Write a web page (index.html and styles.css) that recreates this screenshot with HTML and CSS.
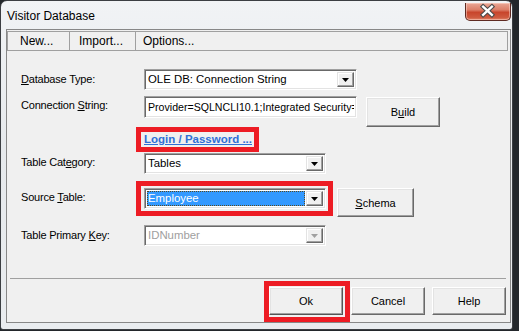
FILE: index.html
```html
<!DOCTYPE html>
<html lang="en">
<head>
  <meta charset="UTF-8" />
  <title>Visitor Database</title>
  <link rel="stylesheet" href="styles.css">
</head>
<body>

  <div class="window">
    <div class="titlebar">
      <span class="title">Visitor Database</span>
      <div class="close">
        <svg width="46" height="18" viewBox="0 0 46 18">
          <path d="M18.5 4.5 L27.5 13 M27.5 4.5 L18.5 13" stroke="#4a4a4a" stroke-width="4.6" stroke-linecap="square"/>
          <path d="M18.5 4.5 L27.5 13 M27.5 4.5 L18.5 13" stroke="#fff" stroke-width="2.4" stroke-linecap="square"/>
        </svg>
      </div>
    </div>

    <div class="client">
      <div class="menubar">
        <span class="menu-item new">New...</span>
        <span class="menu-item import">Import...</span>
        <span class="menu-item options">Options...</span>
      </div>

      <div class="form">
        <div class="row row-dbtype">
          <label class="field-label"><u>D</u>atabase Type:</label>
          <div class="combo wide">
            <span class="combo-text">OLE DB: Connection String</span>
            <span class="arrow"><svg width="7" height="4" viewBox="0 0 7 4"><path d="M0 0h7l-3.5 4z"/></svg></span>
          </div>
        </div>

        <div class="row row-conn">
          <label class="field-label">Connection <u>S</u>tring:</label>
          <div class="textbox wide">
            <span class="combo-text">Provider=SQLNCLI10.1;Integrated Security=SSPI;Persist Security Info=False</span>
          </div>
          <button class="btn build">B<u>u</u>ild</button>
        </div>

        <div class="row row-link">
          <span class="field-label"></span>
          <div class="highlight link-box">
            <a href="#" class="login-link">Login / Password ...</a>
          </div>
        </div>

        <div class="row row-category">
          <label class="field-label">Table Cat<u>e</u>gory:</label>
          <div class="combo narrow">
            <span class="combo-text">Tables</span>
            <span class="arrow"><svg width="7" height="4" viewBox="0 0 7 4"><path d="M0 0h7l-3.5 4z"/></svg></span>
          </div>
        </div>

        <div class="row row-source">
          <label class="field-label">Source <u>T</u>able:</label>
          <div class="highlight source-box">
            <div class="combo narrow">
              <span class="combo-text selected">Employee</span>
              <span class="arrow"><svg width="7" height="4" viewBox="0 0 7 4"><path d="M0 0h7l-3.5 4z"/></svg></span>
            </div>
          </div>
          <button class="btn schema"><u>S</u>chema</button>
        </div>

        <div class="row row-key">
          <label class="field-label">Table Primary <u>K</u>ey:</label>
          <div class="combo narrow disabled">
            <span class="combo-text">IDNumber</span>
            <span class="arrow"><svg width="7" height="4" viewBox="0 0 7 4"><path d="M0 0h7l-3.5 4z"/></svg></span>
          </div>
        </div>
      </div>

      <div class="separator"></div>

      <div class="actions">
        <div class="highlight ok-box">
          <button class="btn default">Ok</button>
        </div>
        <button class="btn cancel">Cancel</button>
        <button class="btn help">Help</button>
      </div>
    </div>
  </div>

</body>
</html>
```

FILE: styles.css
```css
* {
  margin: 0;
  padding: 0;
  box-sizing: border-box;
}

body {
  background: #23272b;
  font-family: 'Liberation Sans', Arial, sans-serif;
  color: #000;
  width: 519px;
  height: 331px;
  overflow: hidden;
}

.window {
  width: 513px;
  height: 330px;
  border: 1px solid #3b3e42;
  border-radius: 7px 7px 3px 3px;
  background: linear-gradient(180deg, #f1f3f5 0%, #e6e9ec 45%, #e9ecef 100%);
  padding: 0 1px 6px 5px;
  display: flex;
  flex-direction: column;
}

.titlebar {
  height: 30px;
  display: flex;
  justify-content: space-between;
  align-items: flex-start;
}

.title {
  margin: 8px 0 0 1px;
  font-size: 12px;
  line-height: 15px;
  color: #000;
}

.close {
  width: 46px;
  height: 18px;
  margin-top: 2px;
  border: 1px solid #5e2a22;
  border-top: none;
  border-radius: 0 0 5px 5px;
  background: linear-gradient(180deg, #e9a796 0%, #dc7f69 40%, #c8452c 55%, #cf5a3f 85%, #e0866c 100%);
  box-shadow: inset 0 0 0 1px rgba(255, 220, 210, 0.5);
  display: flex;
}

.close svg {
  display: block;
  margin: -1px 0 0 -1px;
}

.client {
  flex: 1;
  border: 1px solid #878787;
  background: #f0f0f0;
  display: flex;
  flex-direction: column;
}

.menubar {
  margin: 1px 2px 0 0;
  height: 20px;
  border: 1px solid #a0a0a0;
  display: flex;
  font-size: 12px;
  line-height: 18px;
}

.menu-item {
  border-right: 1px solid #a0a0a0;
}

.menu-item.new {
  width: 62px;
  padding-left: 12px;
}

.menu-item.import {
  width: 66px;
  padding-left: 9px;
}

.menu-item.options {
  border-right: none;
  padding-left: 7px;
}

.form {
  padding-left: 14px;
  display: flex;
  flex-direction: column;
}

.row {
  display: flex;
  align-items: flex-start;
}

.field-label {
  width: 115px;
  flex-shrink: 0;
  font-size: 11px;
  letter-spacing: -0.2px;
  line-height: 14px;
  padding-top: 3px;
}

.row-dbtype { margin-top: 18px; }
.row-conn { margin-top: 6px; }
.row-category { margin-top: 1px; }
.row-source { margin-top: 7px; }
.row-key { margin-top: 8px; }

.row-source .field-label { padding-top: 9px; }
.row-conn .field-label { padding-top: 2px; }
.row-category .field-label { padding-top: 2px; }

.combo,
.textbox {
  height: 21px;
  margin-left: 8px;
  background: #fff;
  border: 1px solid;
  border-color: #a0a0a0 #fff #fff #a0a0a0;
  box-shadow: inset 1px 1px #696969, inset -1px -1px #e3e3e3;
  display: flex;
  align-items: stretch;
  padding: 2px;
  overflow: hidden;
}

.textbox {
  height: 22px;
}

.textbox .combo-text {
  font-size: 10.6px;
  line-height: 16px;
}

.wide { width: 213px; }
.narrow { width: 182px; }

.combo-text {
  flex: 1;
  font-size: 11.4px;
  line-height: 15px;
  padding-left: 1px;
  white-space: nowrap;
  overflow: hidden;
}

.combo-text.selected {
  background: #3399ff;
  color: #fff;
  outline: 1px dotted #5a4a20;
  outline-offset: -1px;
  margin-right: 1px;
}

.arrow {
  width: 17px;
  flex-shrink: 0;
  background: #f0f0f0;
  border: 1px solid;
  border-color: #e3e3e3 #696969 #696969 #e3e3e3;
  box-shadow: inset -1px -1px #a0a0a0, inset 1px 1px #fff;
  display: flex;
  align-items: center;
  justify-content: center;
}

.arrow svg {
  display: block;
  fill: #000;
}

.combo.disabled .combo-text {
  color: #a0a0a0;
}

.combo.disabled .arrow svg {
  fill: #a0a0a0;
}

.btn {
  font-family: 'Liberation Sans', Arial, sans-serif;
  font-size: 11px;
  color: #000;
  background: #f0f0f0;
  border: 1px solid;
  border-color: #fff #696969 #696969 #fff;
  box-shadow: inset -1px -1px #a0a0a0, inset 1px 1px #e3e3e3;
  width: 74px;
  height: 28px;
}

.btn.build {
  margin: 1px 0 0 9px;
  height: 30px;
}

.btn.schema {
  margin: 7px 0 0 4px;
  width: 77px;
  height: 29px;
}

.highlight {
  border: 5px solid #ed1c24;
}

.link-box {
  padding: 0 2px 0 3px;
  height: 25px;
}

.login-link {
  display: block;
  font-size: 11.5px;
  font-weight: bold;
  line-height: 15px;
  color: #2f6fd6;
  text-decoration: underline;
}

.source-box {
  padding: 2px 2px 2px 0;
}

.source-box .combo {
  margin-left: 3px;
}

.separator {
  margin: 32px 4px 0 3px;
  border-top: 1px solid #a0a0a0;
}

.actions {
  margin-top: 2px;
  padding-right: 4px;
  display: flex;
  justify-content: flex-end;
  align-items: flex-start;
}

.ok-box {
  padding: 1px 2px 2px 0;
}

.btn.default {
  border-color: #fff #555 #555 #fff;
}

.btn.cancel {
  margin: 6px 0 0 1px;
}

.btn.help {
  margin: 6px 0 0 7px;
}
```
